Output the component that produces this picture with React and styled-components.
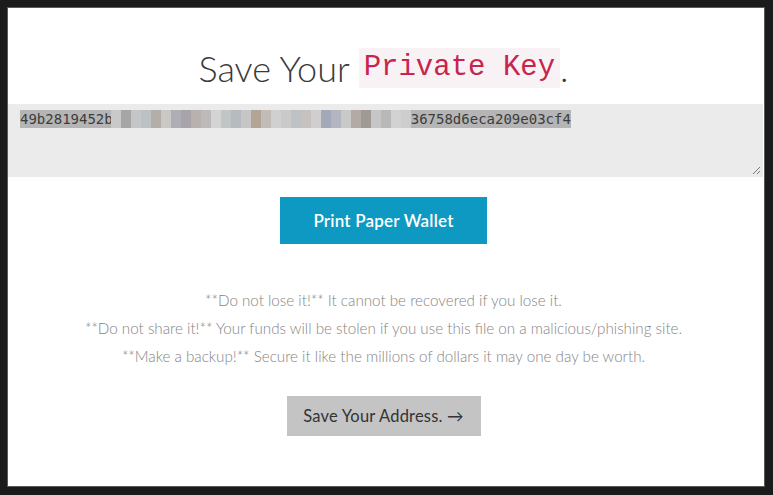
import React from 'react';
import styled, { createGlobalStyle } from 'styled-components';

const GlobalStyle = createGlobalStyle`
  html, body {
    margin: 0;
    padding: 0;
    background: #1b1b1b;
  }
  body {
    padding: 7px 8px 8px 7px;
    font-family: Lato, "Open Sans", Arial, sans-serif;
  }
`;

const Panel = styled.div`
  box-sizing: border-box;
  width: 758px;
  height: 480px;
  padding-right: 5px;
  background: #fff;
  border: 1px solid #5a5a5a;
  display: flex;
  flex-direction: column;
  align-items: center;
`;

const Heading = styled.h1`
  margin: 40px 0 0;
  font-family: Lato, sans-serif;
  font-weight: 300;
  font-size: 36px;
  line-height: 40px;
  color: #3a3a3a;
`;

const Code = styled.code`
  display: inline-block;
  font-family: "Liberation Mono", "DejaVu Sans Mono", monospace;
  font-size: 29px;
  line-height: 40px;
  padding: 0 5px;
  color: #c7254e;
  background: #f9f2f4;
  vertical-align: top;
`;

const KeyBox = styled.div`
  position: relative;
  box-sizing: border-box;
  align-self: stretch;
  height: 73px;
  margin: 16px -4px 0 0;
  padding: 6px 12px;
  background: #ebebeb;
  font-family: "DejaVu Sans Mono", "Liberation Mono", monospace;
  font-size: 14px;
  line-height: 18px;
  color: #3c3c3c;
`;

const Selected = styled.span`
  display: inline-flex;
  align-items: stretch;
  background: #b5b5b5;
  white-space: pre;
`;

const Mosaic = styled.span`
  display: inline-flex;
  margin-left: -2px;
`;

const Cell = styled.span`
  width: 10px;
  height: 18px;
  background: ${p => p.$c};
`;

const Grip = styled.svg`
  position: absolute;
  right: 2px;
  bottom: 2px;
`;

const PrintButton = styled.button`
  margin-top: 20px;
  width: 207px;
  height: 47px;
  border: 0;
  background: #0e99c2;
  color: #fff;
  font-family: Lato, sans-serif;
  font-size: 17px;
  font-weight: 600;
  letter-spacing: 0.2px;
  cursor: pointer;
`;

const Warnings = styled.div`
  margin-top: 42px;
  text-align: center;
  font-family: Lato, sans-serif;
  font-weight: 300;
  font-size: 15.2px;
  line-height: 28px;
  color: #858585;
`;

const NextButton = styled.button`
  margin-top: 26px;
  width: 194px;
  height: 40px;
  border: 0;
  background: #c4c4c4;
  color: #333;
  font-family: Lato, sans-serif;
  font-size: 16.5px;
  letter-spacing: 0.2px;
  cursor: pointer;
`;

const mosaicColors = [
  '#c9c9c9', '#a6a6a6', '#c4c6c8', '#bcc1c6', '#b3aea8', '#cbc8c3',
  '#aeaeb6', '#a8a4a9', '#b9b1ae', '#bdbabc', '#d4d4d4', '#c2c5c6',
  '#b6bbbf', '#c6c6c6', '#b3a596', '#c2bcb6', '#d0d0d0', '#cacaca',
  '#bfc2c4', '#c7c2bf', '#cfcfcf', '#a3a9b8', '#b1b6c0', '#c9c9c9',
  '#b4aaa5', '#a09a96', '#c6c6c6', '#b8b8b8', '#d2d2d2', '#cdcdcd',
];

const App = () => (
  <>
    <GlobalStyle />
    <Panel>
      <Heading>
        Save Your <Code>Private Key</Code>.
      </Heading>
      <KeyBox>
        <Selected>
          49b2819452b
          <Mosaic>
            {mosaicColors.map((c, i) => (
              <Cell key={i} $c={c} />
            ))}
          </Mosaic>
          36758d6eca209e03cf4
        </Selected>
        <Grip width="10" height="10" viewBox="0 0 10 10">
          <path d="M9 2 L2 9 M9 6 L6 9" stroke="#777" strokeWidth="1" />
        </Grip>
      </KeyBox>
      <PrintButton>Print Paper Wallet</PrintButton>
      <Warnings>
        <div>**Do not lose it!** It cannot be recovered if you lose it.</div>
        <div>**Do not share it!** Your funds will be stolen if you use this file on a malicious/phishing site.</div>
        <div>**Make a backup!** Secure it like the millions of dollars it may one day be worth.</div>
      </Warnings>
      <NextButton>Save Your Address. →</NextButton>
    </Panel>
  </>
);

export default App;
